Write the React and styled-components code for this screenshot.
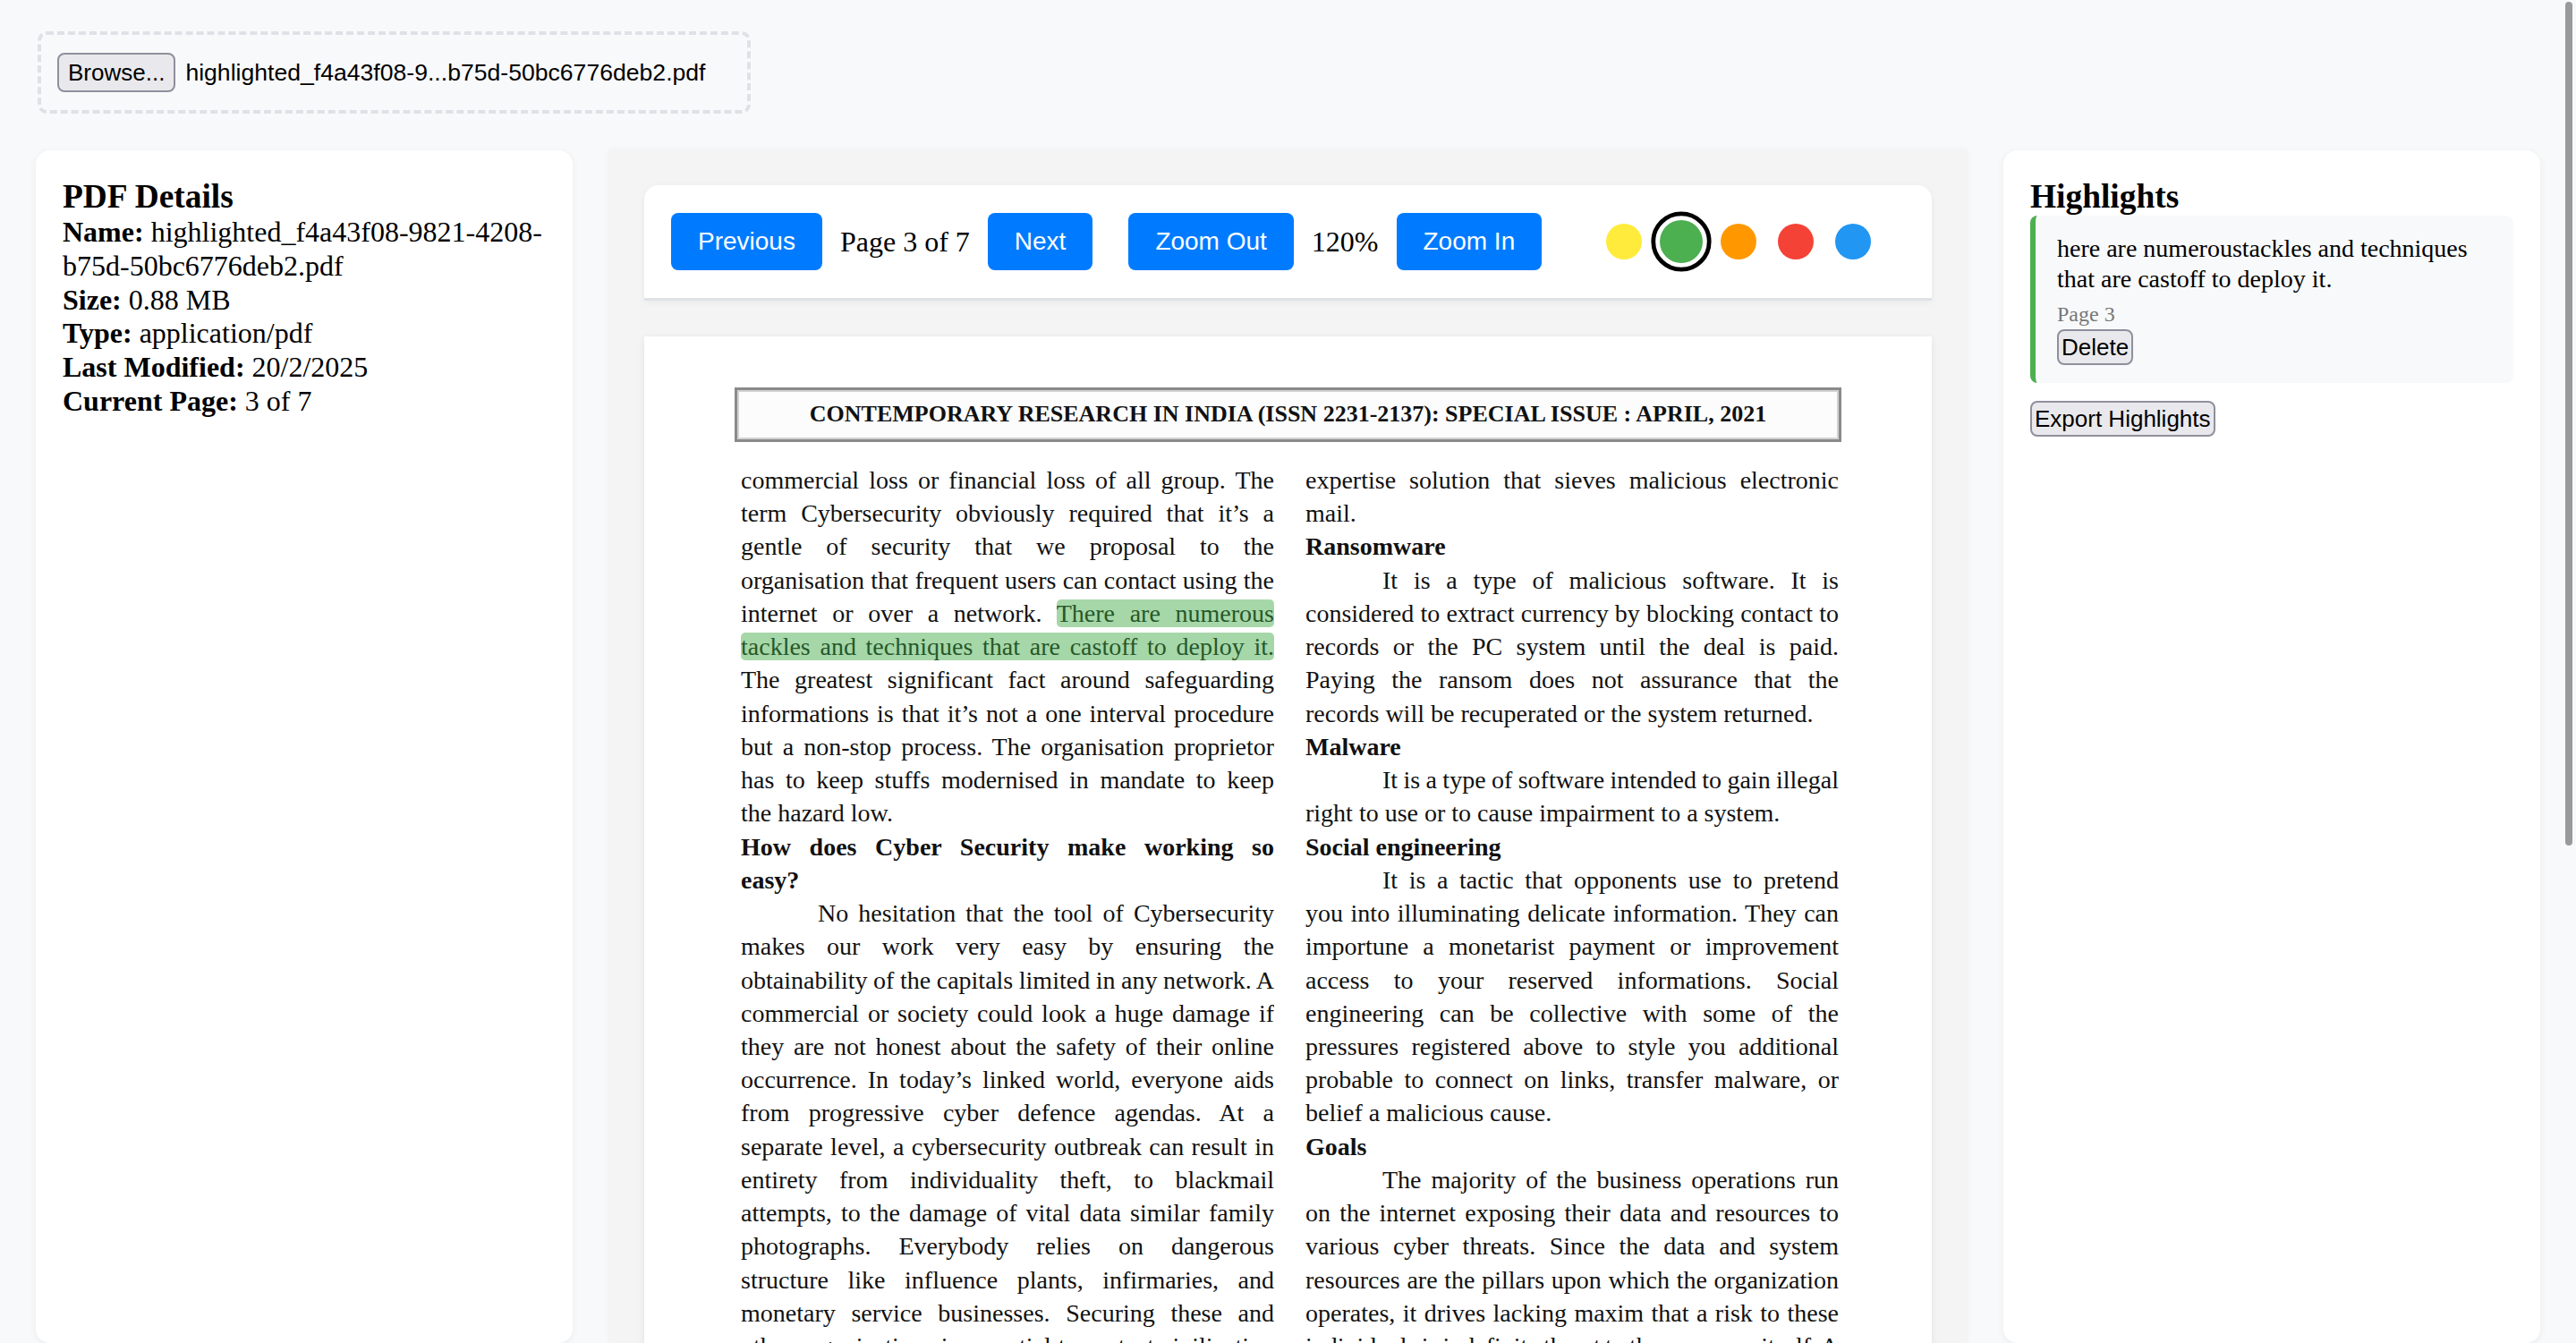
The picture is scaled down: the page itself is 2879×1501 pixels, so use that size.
import React from "react";
import styled, { createGlobalStyle } from "styled-components";

const GlobalStyle = createGlobalStyle`
  html, body {
    margin: 0;
    padding: 0;
  }
  body {
    background: #f8f9fa;
    font-family: "Liberation Serif", "Times New Roman", serif;
    color: #000;
    overflow: hidden;
  }
`;

const Screen = styled.div`
  height: 100vh;
  overflow: hidden;
  display: flex;
  flex-direction: column;
  box-sizing: border-box;
  padding: 35px 40px 0 40px;
`;

const UploadBox = styled.div`
  width: 797px;
  margin-left: 2px;
  box-sizing: border-box;
  display: flex;
  align-items: center;
  padding: 20px 18px;
  border: 4px dashed #dfe1e6;
  border-radius: 10px;
`;

const SystemButton = styled.button`
  font-family: "Liberation Sans", Arial, sans-serif;
  font-size: 26px;
  color: #000;
  background: #e9e9ed;
  border: 2px solid #8f8f9d;
  border-radius: 8px;
  height: ${(p) => p.$height || 40}px;
  padding: 0 ${(p) => p.$padX || 3}px;
  margin-top: ${(p) => p.$marginTop || 0}px;
  line-height: 1;
  cursor: pointer;
`;

const FileName = styled.span`
  margin-left: 11px;
  font-family: "Liberation Sans", Arial, sans-serif;
  font-size: 26.6px;
  color: #000;
`;

const Columns = styled.div`
  flex: 1;
  min-height: 0;
  margin-top: 41px;
  display: grid;
  grid-template-columns: 600px minmax(0, 1fr) 600px;
  column-gap: 41px;
`;

const Card = styled.aside`
  background: #fff;
  border-radius: 16px;
  box-shadow: 0 2px 10px rgba(0, 0, 0, 0.06);
  padding: 30px;
  box-sizing: border-box;
`;

const CardTitle = styled.h3`
  margin: 0;
  font-size: 37.4px;
  font-weight: bold;
  line-height: normal;
`;

const InfoLine = styled.p`
  margin: 0;
  font-size: 32px;
  line-height: 37.8px;

  b {
    font-weight: bold;
  }
`;

const Viewer = styled.main`
  background: #f4f4f4;
  padding: 39px 39px 0 39px;
  overflow: hidden;
  min-width: 0;
  box-shadow: 0 0 8px rgba(0, 0, 0, 0.05);
`;

const Toolbar = styled.div`
  display: flex;
  align-items: center;
  gap: 20px;
  padding: 31px 30px;
  background: #fff;
  border-radius: 16px 16px 0 0;
  border-bottom: 3px solid #dee2e6;
  box-shadow: 0 2px 8px rgba(0, 0, 0, 0.05);
`;

const ActionButton = styled.button`
  font-family: "Liberation Sans", Arial, sans-serif;
  font-size: 28px;
  line-height: 32px;
  color: #fff;
  background: #007bff;
  border: none;
  border-radius: 8px;
  padding: 16px 30px;
  margin-left: ${(p) => p.$gapBefore || 0}px;
  cursor: pointer;
`;

const ToolbarText = styled.span`
  font-size: 32px;
  color: #000;
`;

const Swatches = styled.div`
  display: flex;
  align-items: center;
  gap: 24px;
  margin-left: 52px;
`;

const Swatch = styled.span`
  width: 40px;
  height: 40px;
  border-radius: 50%;
  background: ${(p) => p.$color};
  transform: ${(p) => (p.$active ? "scale(1.2)" : "none")};
  outline: ${(p) => (p.$active ? "4px solid #000" : "none")};
  outline-offset: 4px;
  cursor: pointer;
`;

const Sheet = styled.div`
  margin-top: 40px;
  height: 2035px;
  background: #fff;
  box-shadow: 0 2px 8px rgba(0, 0, 0, 0.08);
  padding: 57px 104px 0 108px;
  box-sizing: border-box;
`;

const JournalHeader = styled.div`
  margin: 0 -3px 0 -7px;
  height: 61px;
  box-sizing: border-box;
  border: 3px solid #8a8a8a;
  box-shadow: inset 0 0 0 2px #d2d2d2;
  background: #fcfcfc;
  text-align: center;
  font-size: 26px;
  font-weight: bold;
  line-height: 53px;
  color: #111;
`;

const TextColumns = styled.div`
  display: grid;
  grid-template-columns: minmax(0, 1fr) minmax(0, 1fr);
  column-gap: 35px;
  margin-top: 24px;
`;

const Line = styled.div`
  font-size: 28px;
  line-height: 37.24px;
  height: 37.24px;
  overflow: hidden;
  color: #111;
  white-space: nowrap;
  word-spacing: ${(p) => (p.$last ? "0" : "-3px")};
  text-align: justify;
  text-align-last: ${(p) => (p.$last ? "left" : "justify")};
  font-weight: ${(p) => (p.$bold ? "bold" : "normal")};
  text-indent: ${(p) => (p.$indent ? "86px" : "0")};
`;

const Mark = styled.span`
  background: #a6d7a8;
  color: #26582a;
  border-radius: 5px;
`;

const HighlightItem = styled.div`
  background: #f8f9fa;
  border-left: 6px solid #4caf50;
  border-radius: 8px;
  padding: 20px 24px;
`;

const HighlightText = styled.p`
  margin: 0;
  font-size: 28px;
  line-height: 33.5px;
`;

const PageTag = styled.div`
  margin: 10px 0 3px;
  font-size: 24px;
  color: #777;
`;

const ScrollThumb = styled.div`
  position: fixed;
  top: 2px;
  right: 4px;
  width: 8px;
  height: 943px;
  border-radius: 4px;
  background: #9a9a9a;
`;

const leftLines = [
  { t: "commercial loss or financial loss of all group. The" },
  { t: "term Cybersecurity obviously required that it’s a" },
  { t: "gentle of security that we proposal to the" },
  { t: "organisation that frequent users can contact using the" },
  { t: "internet or over a network. ", mark: "There are numerous" },
  { mark: "tackles and techniques that are castoff to deploy it." },
  { t: "The greatest significant fact around safeguarding" },
  { t: "informations is that it’s not a one interval procedure" },
  { t: "but a non-stop process. The organisation proprietor" },
  { t: "has to keep stuffs modernised in mandate to keep" },
  { t: "the hazard low.", last: true },
  { t: "How does Cyber Security make working so", bold: true },
  { t: "easy?", bold: true, last: true },
  { t: "No hesitation that the tool of Cybersecurity", indent: true },
  { t: "makes our work very easy by ensuring the" },
  { t: "obtainability of the capitals limited in any network. A" },
  { t: "commercial or society could look a huge damage if" },
  { t: "they are not honest about the safety of their online" },
  { t: "occurrence. In today’s linked world, everyone aids" },
  { t: "from progressive cyber defence agendas. At a" },
  { t: "separate level, a cybersecurity outbreak can result in" },
  { t: "entirety from individuality theft, to blackmail" },
  { t: "attempts, to the damage of vital data similar family" },
  { t: "photographs. Everybody relies on dangerous" },
  { t: "structure like influence plants, infirmaries, and" },
  { t: "monetary service businesses. Securing these and" },
  { t: "other organizations is essential to protect civilization" },
];

const rightLines = [
  { t: "expertise solution that sieves malicious electronic" },
  { t: "mail.", last: true },
  { t: "Ransomware", bold: true, last: true },
  { t: "It is a type of malicious software. It is", indent: true },
  { t: "considered to extract currency by blocking contact to" },
  { t: "records or the PC system until the deal is paid." },
  { t: "Paying the ransom does not assurance that the" },
  { t: "records will be recuperated or the system returned.", last: true },
  { t: "Malware", bold: true, last: true },
  { t: "It is a type of software intended to gain illegal", indent: true },
  { t: "right to use or to cause impairment to a system.", last: true },
  { t: "Social engineering", bold: true, last: true },
  { t: "It is a tactic that opponents use to pretend", indent: true },
  { t: "you into illuminating delicate information. They can" },
  { t: "importune a monetarist payment or improvement" },
  { t: "access to your reserved informations. Social" },
  { t: "engineering can be collective with some of the" },
  { t: "pressures registered above to style you additional" },
  { t: "probable to connect on links, transfer malware, or" },
  { t: "belief a malicious cause.", last: true },
  { t: "Goals", bold: true, last: true },
  { t: "The majority of the business operations run", indent: true },
  { t: "on the internet exposing their data and resources to" },
  { t: "various cyber threats. Since the data and system" },
  { t: "resources are the pillars upon which the organization" },
  { t: "operates, it drives lacking maxim that a risk to these" },
  { t: "individuals is indefinite threat to the company itself. A" },
];

const colors = ["#ffeb3b", "#4caf50", "#ff9800", "#f44336", "#2196f3"];

function TextColumn({ lines }) {
  return (
    <div>
      {lines.map((l, i) => (
        <Line key={i} $last={l.last} $bold={l.bold} $indent={l.indent}>
          {l.t}
          {l.mark && <Mark>{l.mark}</Mark>}
        </Line>
      ))}
    </div>
  );
}

function App() {
  return (
    <Screen>
      <GlobalStyle />
      <UploadBox>
        <SystemButton $height={44} $padX={10}>Browse...</SystemButton>
        <FileName>highlighted_f4a43f08-9...b75d-50bc6776deb2.pdf</FileName>
      </UploadBox>

      <Columns>
        <Card>
          <CardTitle>PDF Details</CardTitle>
          <InfoLine>
            <b>Name:</b> highlighted_f4a43f08-9821-4208-b75d-50bc6776deb2.pdf
          </InfoLine>
          <InfoLine>
            <b>Size:</b> 0.88 MB
          </InfoLine>
          <InfoLine>
            <b>Type:</b> application/pdf
          </InfoLine>
          <InfoLine>
            <b>Last Modified:</b> 20/2/2025
          </InfoLine>
          <InfoLine>
            <b>Current Page:</b> 3 of 7
          </InfoLine>
        </Card>

        <Viewer>
          <Toolbar>
            <ActionButton>Previous</ActionButton>
            <ToolbarText>Page 3 of 7</ToolbarText>
            <ActionButton>Next</ActionButton>
            <ActionButton $gapBefore={20}>Zoom Out</ActionButton>
            <ToolbarText>120%</ToolbarText>
            <ActionButton>Zoom In</ActionButton>
            <Swatches>
              {colors.map((c) => (
                <Swatch key={c} $color={c} $active={c === "#4caf50"} />
              ))}
            </Swatches>
          </Toolbar>

          <Sheet>
            <JournalHeader>
              CONTEMPORARY RESEARCH IN INDIA (ISSN 2231-2137): SPECIAL ISSUE : APRIL, 2021
            </JournalHeader>
            <TextColumns>
              <TextColumn lines={leftLines} />
              <TextColumn lines={rightLines} />
            </TextColumns>
          </Sheet>
        </Viewer>

        <Card>
          <CardTitle>Highlights</CardTitle>
          <HighlightItem>
            <HighlightText>
              here are numeroustackles and techniques that are castoff to deploy it.
            </HighlightText>
            <PageTag>Page 3</PageTag>
            <SystemButton>Delete</SystemButton>
          </HighlightItem>
          <SystemButton $marginTop={20}>Export Highlights</SystemButton>
        </Card>
      </Columns>
      <ScrollThumb />
    </Screen>
  );
}

export default App;
